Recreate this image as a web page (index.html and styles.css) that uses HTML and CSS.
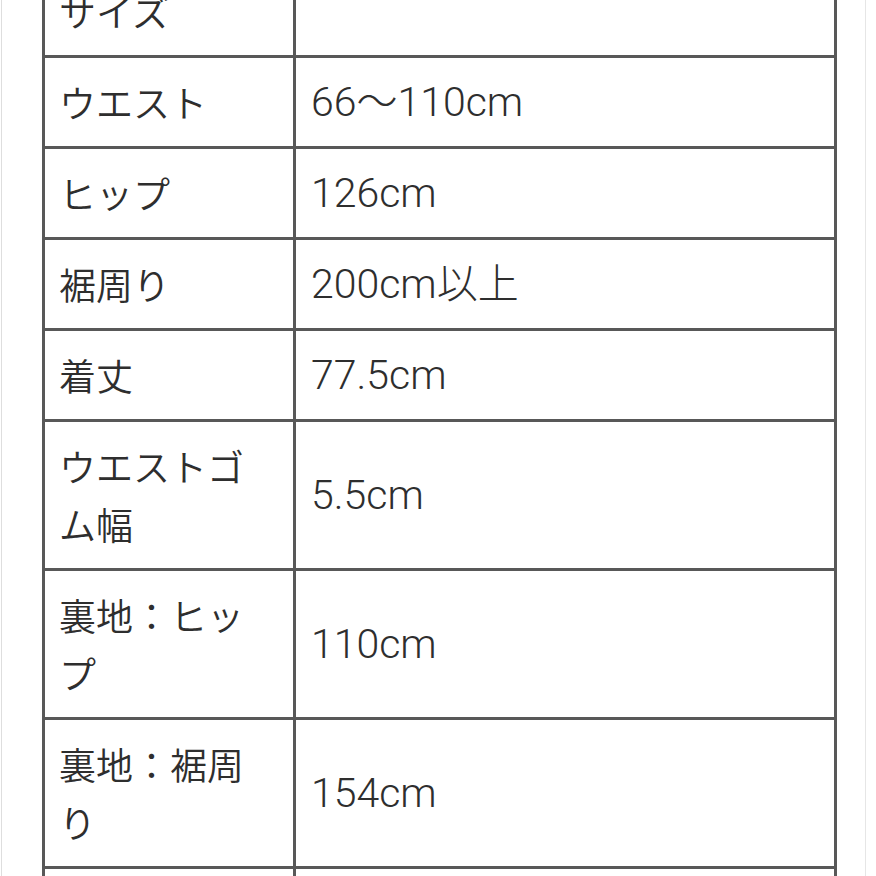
FILE: index.html
```html
<!DOCTYPE html>
<html lang="ja">
<head>
<meta charset="utf-8">
<title>サイズ表</title>
<link rel="stylesheet" href="styles.css">
</head>
<body>
<div class="page">
  <div class="spec">
    <div class="cell label">サイズ</div><div class="cell value"></div>
    <div class="cell label">ウエスト</div><div class="cell value">66～110cm</div>
    <div class="cell label">ヒップ</div><div class="cell value">126cm</div>
    <div class="cell label">裾周り</div><div class="cell value">200cm以上</div>
    <div class="cell label">着丈</div><div class="cell value">77.5cm</div>
    <div class="cell label">ウエストゴム幅</div><div class="cell value">5.5cm</div>
    <div class="cell label">裏地：ヒップ</div><div class="cell value">110cm</div>
    <div class="cell label">裏地：裾周り</div><div class="cell value">154cm</div>
    <div class="cell label">&nbsp;</div><div class="cell value"></div>
  </div>
</div>
</body>
</html>
```
FILE: styles.css
```css
html, body {
  margin: 0;
  padding: 0;
  background: #ffffff;
}
body {
  height: 876px;
  overflow: hidden;
}
.page {
  margin-left: 1px;
  width: 865px;
  box-sizing: border-box;
  min-height: 900px;
  border-left: 1px solid #dedede;
  border-right: 1px solid #e6e6e6;
  padding-left: 40px;
}
.spec {
  margin-top: -36px;
  width: 795px;
  box-sizing: border-box;
  display: grid;
  grid-template-columns: 248px 1fr;
  gap: 3px;
  padding: 3px;
  background: #585858;
  line-height: 58px;
  color: #2e2e2e;
}
.cell {
  background: #ffffff;
  padding: 15px 14px;
}
.label {
  font-family: "Noto Sans CJK JP", "Noto Sans", sans-serif;
  font-size: 37px;
  font-weight: 350;
}
.value {
  display: flex;
  align-items: center;
  padding-left: 15px;
  font-family: Roboto, "Noto Sans CJK JP", sans-serif;
  font-size: 41px;
  font-weight: 300;
}
```
